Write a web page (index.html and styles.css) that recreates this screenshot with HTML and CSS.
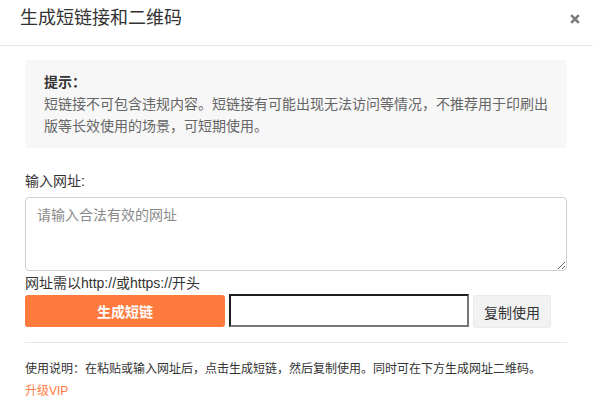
FILE: index.html
```html
<!DOCTYPE html>
<html lang="zh-CN">
<head>
<meta charset="utf-8">
<title>生成短链接和二维码</title>
<link rel="stylesheet" href="styles.css">
</head>
<body>
<div class="dialog">
  <div class="header">
    <div class="title">生成短链接和二维码</div>
    <span class="close" aria-label="关闭">
      <svg width="10" height="10" viewBox="0 0 10 10"><path d="M1.2 1.2 L8.8 8.8 M8.8 1.2 L1.2 8.8" stroke="#7a7a7a" stroke-width="2.6" stroke-linecap="butt"/></svg>
    </span>
  </div>
  <div class="body">
    <div class="tip">
      <div class="tip-title">提示：</div>
      <div class="tip-text">短链接不可包含违规内容。短链接有可能出现无法访问等情况，不推荐用于印刷出版等长效使用的场景，可短期使用。</div>
    </div>
    <div class="label">输入网址:</div>
    <textarea class="url" placeholder="请输入合法有效的网址"></textarea>
    <div class="hint">网址需以http://或https://开头</div>
    <div class="actions">
      <button class="btn-gen">生成短链</button>
      <input class="result" type="text">
      <button class="btn-copy">复制使用</button>
    </div>
    <div class="divider"></div>
    <div class="usage">使用说明：在粘贴或输入网址后，点击生成短链，然后复制使用。同时可在下方生成网址二维码。</div>
    <a class="vip" href="#">升级VIP</a>
  </div>
</div>
</body>
</html>
```

FILE: styles.css
```css
* { box-sizing: border-box; }
html, body { margin: 0; padding: 0; background: #fff; }
body {
  font-family: "Liberation Sans", "Noto Sans CJK SC", sans-serif;
  color: #333;
  width: 593px;
  height: 406px;
  overflow: hidden;
}
.header {
  height: 46px;
  border-bottom: 1px solid #e6e6e6;
  display: flex;
  justify-content: space-between;
  align-items: flex-start;
  padding: 0 13px 0 20px;
}
.title {
  font-size: 18px;
  line-height: 36px;
  color: #333;
}
.close {
  display: flex;
  margin-top: 14px;
}
.body {
  padding: 14px 26px 0 25px;
}
.tip {
  background: #f7f7f7;
  border-radius: 4px;
  padding: 11px 19px;
  font-size: 14px;
  line-height: 22px;
  color: #666;
}
.tip-title {
  font-weight: bold;
  color: #333;
}
.label {
  margin-top: 23px;
  font-size: 14px;
  line-height: 20px;
  color: #333;
}
.url {
  display: block;
  margin-top: 6px;
  width: 100%;
  height: 74px;
  border: 1px solid #cdd0d6;
  border-radius: 4px;
  padding: 7px 11px;
  font-family: inherit;
  font-size: 14px;
  line-height: 20px;
  resize: vertical;
  outline: none;
}
.url::placeholder { color: #8a8a8a; }
.hint {
  margin-top: 2px;
  font-size: 14px;
  line-height: 20px;
  color: #333;
}
.actions {
  margin-top: 1px;
  display: flex;
  align-items: flex-start;
}
.btn-gen {
  margin-top: 1px;
  width: 200px;
  height: 32px;
  border: none;
  border-radius: 3px;
  background: #ff7a3d;
  color: #fff;
  font-family: inherit;
  font-size: 14px;
  font-weight: bold;
  padding: 0;
}
.result {
  margin-left: 4px;
  width: 240px;
  height: 33px;
  border-style: solid;
  border-width: 2px;
  border-color: #1e1e1e #767676 #767676 #1e1e1e;
  padding: 0 4px;
  font-family: inherit;
  font-size: 14px;
  outline: none;
  background: #fff;
}
.btn-copy {
  margin-left: 4px;
  margin-top: 1px;
  width: 78px;
  height: 33px;
  border: 1px solid #ebebeb;
  border-radius: 2px;
  background: #f2f2f2;
  color: #333;
  font-family: inherit;
  font-size: 14px;
  padding: 0;
}
.divider {
  margin-top: 14px;
  height: 1px;
  background: #e6e6e6;
}
.usage {
  margin-top: 17px;
  font-size: 12px;
  line-height: 18px;
  color: #333;
}
.vip {
  display: block;
  margin-top: 4px;
  font-size: 12px;
  line-height: 18px;
  color: #ff7a3d;
  text-decoration: none;
}
```
